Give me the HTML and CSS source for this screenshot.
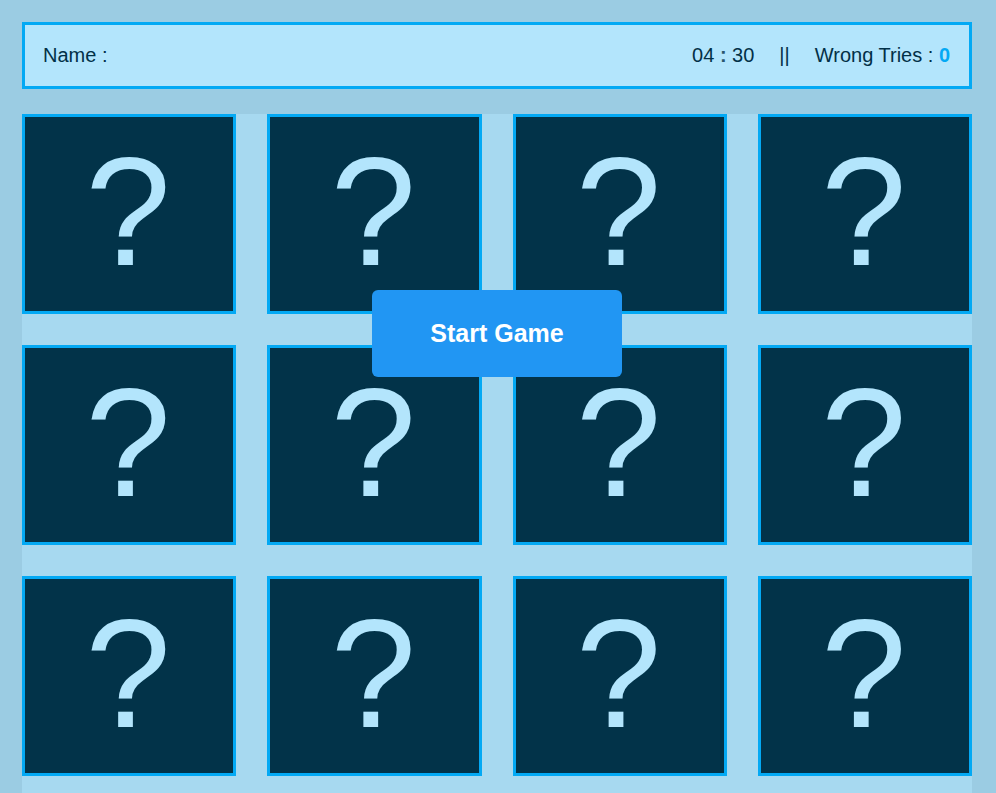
FILE: index.html
```html
<!DOCTYPE html>
<html lang="en">
<head>
<meta charset="utf-8">
<meta name="viewport" content="width=device-width, initial-scale=1">
<title>Memory Game</title>
<link rel="stylesheet" href="styles.css">
</head>
<body>
<header class="info">
  <div class="name">Name : <span></span></div>
  <div class="stats">
    <span class="timer">04 <b>:</b> 30</span>
    <span>||</span>
    <span>Wrong Tries : <strong class="tries">0</strong></span>
  </div>
</header>
<main class="board">
  <div class="card">?</div>
  <div class="card">?</div>
  <div class="card">?</div>
  <div class="card">?</div>
  <div class="card">?</div>
  <div class="card">?</div>
  <div class="card">?</div>
  <div class="card">?</div>
  <div class="card">?</div>
  <div class="card">?</div>
  <div class="card">?</div>
  <div class="card">?</div>
</main>
<div class="overlay"><button class="start" type="button">Start Game</button></div>
</body>
</html>
```
FILE: styles.css
```css
* {
  box-sizing: border-box;
}

body {
  display: flex;
  flex-direction: column;
  gap: 25px;
  min-height: 100vh;
  margin: 0;
  padding: 22px 24px 0 22px;
  overflow-x: hidden;
  background: #9bcce3;
  color: #023047;
  font-family: "Liberation Sans", Arial, sans-serif;
}

.info {
  display: flex;
  justify-content: space-between;
  padding: 18px 19px 18px 18px;
  border: 3px solid #03a9f4;
  background: #b3e5fc;
  font-size: 20px;
  line-height: 25px;
}

.stats {
  display: flex;
  gap: 25px;
}

.timer b {
  color: #2a566d;
}

.tries {
  color: #03a9f4;
}

.board {
  display: grid;
  flex: 1;
  grid-template-columns: repeat(4, 1fr);
  grid-auto-rows: 200px;
  align-content: start;
  gap: 31px;
  padding-bottom: 17px;
  background: #a7d9f0;
}

.card {
  display: flex;
  align-items: center;
  justify-content: center;
  padding: 0 2px 4px 0;
  border: 3px solid #03a9f4;
  background: #023349;
  color: #b3e5fc;
  font-size: 154px;
  line-height: 190px;
}

.overlay {
  position: fixed;
  top: 290px;
  left: 0;
  display: flex;
  justify-content: center;
  width: 100%;
  padding-right: 2px;
}

.start {
  padding: 28px 58px;
  border: 0;
  border-radius: 6px;
  background: #2196f3;
  color: #fff;
  font: bold 25px/31px "Liberation Sans", Arial, sans-serif;
  cursor: pointer;
}
```
